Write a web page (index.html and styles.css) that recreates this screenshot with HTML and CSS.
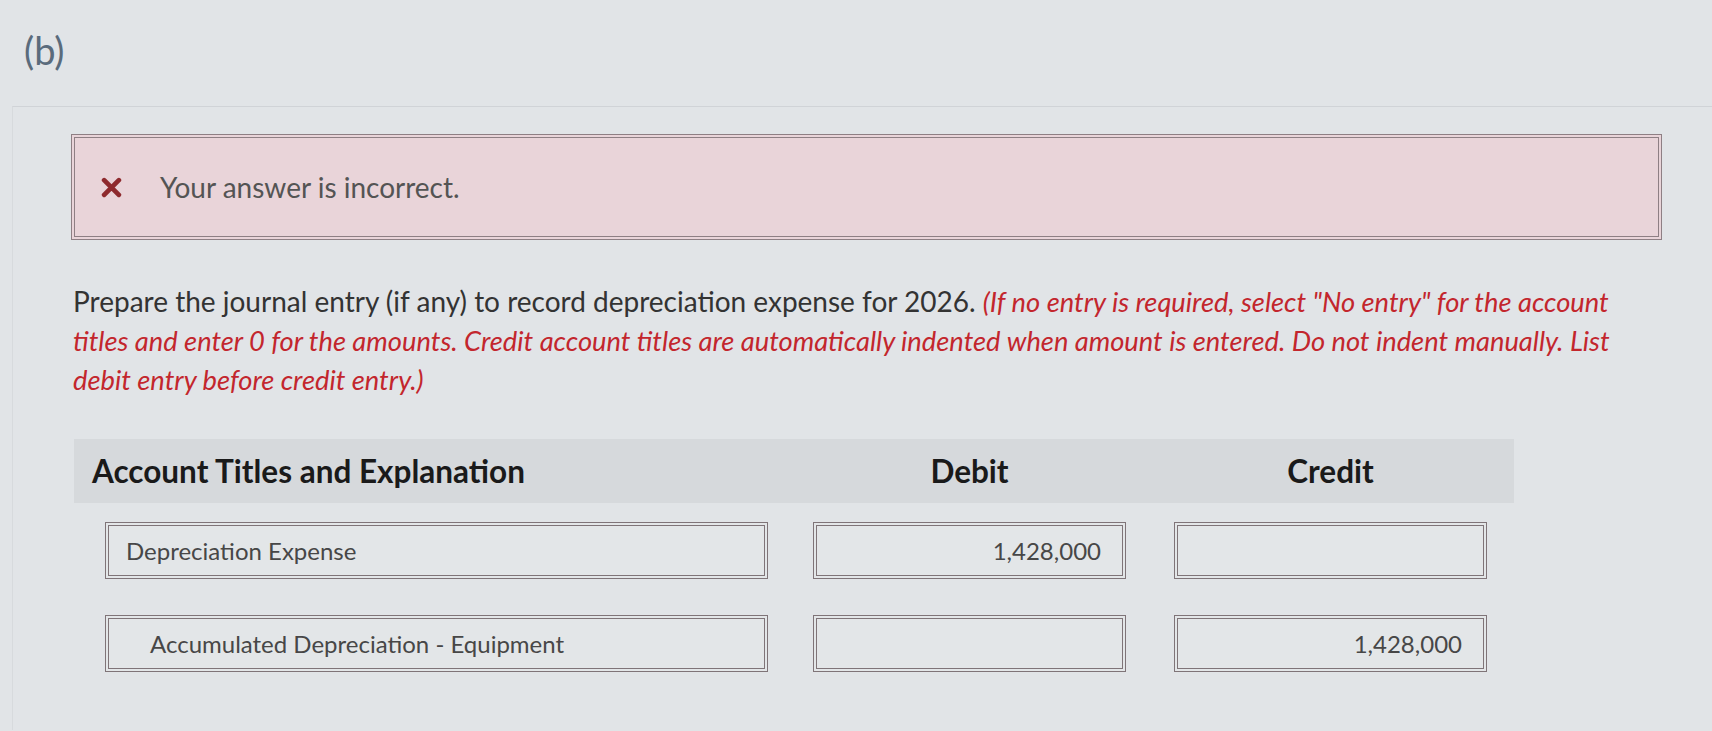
FILE: index.html
```html
<!DOCTYPE html>
<html lang="en">
<head>
    <meta charset="UTF-8">
    <title>Journal Entry - Part (b)</title>
    <link rel="stylesheet" href="styles.css">
</head>
<body>
    <div class="part-label">(b)</div>

    <div class="question">
        <!-- Feedback box -->
        <div class="alert">
            <svg class="alert-icon" viewBox="0 0 20 20" width="21" height="21">
                <path d="M3 3 L17 17 M17 3 L3 17" stroke="#8e2a2e" stroke-width="4.5" stroke-linecap="round"/>
            </svg>
            <span>Your answer is incorrect.</span>
        </div>

        <p class="prompt">Prepare the journal entry (if any) to record depreciation expense for 2026. <em class="note">(If no entry is required, select "No entry" for the account titles and enter 0 for the amounts. Credit account titles are automatically indented when amount is entered. Do not indent manually. List debit entry before credit entry.)</em></p>

        <!-- Journal table -->
        <div class="journal">
            <div class="journal-head">
                <div class="col-account">Account Titles and Explanation</div>
                <div class="col-amount">Debit</div>
                <div class="col-amount">Credit</div>
            </div>

            <div class="journal-row">
                <div class="field field-account">Depreciation Expense</div>
                <div class="field field-amount">1,428,000</div>
                <div class="field field-amount"></div>
            </div>

            <div class="journal-row">
                <div class="field field-account indented">Accumulated Depreciation - Equipment</div>
                <div class="field field-amount"></div>
                <div class="field field-amount">1,428,000</div>
            </div>
        </div>
    </div>
</body>
</html>
```

FILE: styles.css
```css
body {
    margin: 0;
    background-color: #e1e4e7;
    font-family: Lato, "Open Sans", sans-serif;
    color: #3a3a3a;
}

.part-label {
    padding: 27px 0 0 24px;
    height: 106px;
    box-sizing: border-box;
    font-size: 38px;
    line-height: 46px;
    color: #5a6b7c;
}

.question {
    margin-left: 12px;
    border-top: 1px solid #d0d3d7;
    border-left: 1px solid #d7dadd;
    padding: 27px 50px 0 58px;
    min-height: 624px;
    box-sizing: border-box;
}

/* red feedback box */
.alert {
    display: flex;
    align-items: center;
    gap: 38px;
    height: 106px;
    box-sizing: border-box;
    padding-left: 26px;
    background-color: #e9d4d9;
    border: 4px double #8e7f84;
    font-size: 28px;
    color: #545454;
}

.alert-icon {
    flex-shrink: 0;
}

.prompt {
    margin: 42px 0 0 2px;
    font-size: 28px;
    line-height: 39px;
    color: #333;
}

.note {
    color: #c3262d;
    font-size: 27.3px;
}

.journal {
    margin-top: 40px;
    margin-left: 3px;
}

.journal-head {
    display: flex;
    gap: 45px;
    align-items: center;
    width: 1440px;
    height: 64px;
    padding-left: 18px;
    box-sizing: border-box;
    background-color: #d6d9dc;
    font-weight: bold;
    font-size: 31.5px;
    color: #1a1a1a;
}

.journal-head .col-account {
    width: 676px;
}

.journal-head .col-amount {
    width: 313px;
    text-align: center;
}

.journal-head .col-amount:last-child {
    margin-left: 3px;
}

.journal-row {
    display: flex;
    gap: 45px;
    padding-left: 31px;
    margin-top: 19px;
}

.journal-row + .journal-row {
    margin-top: 36px;
}

.field {
    height: 57px;
    box-sizing: border-box;
    border: 4px double #7f7478;
    background-color: #e3e6e8;
    display: flex;
    align-items: center;
    font-size: 24px;
    color: #474747;
}

.field-account {
    width: 663px;
    padding-left: 17px;
}

.field-account.indented {
    padding-left: 41px;
}

.field-amount {
    width: 313px;
    justify-content: flex-end;
    padding-right: 21px;
}

.field-amount:last-child {
    margin-left: 3px;
}
```
